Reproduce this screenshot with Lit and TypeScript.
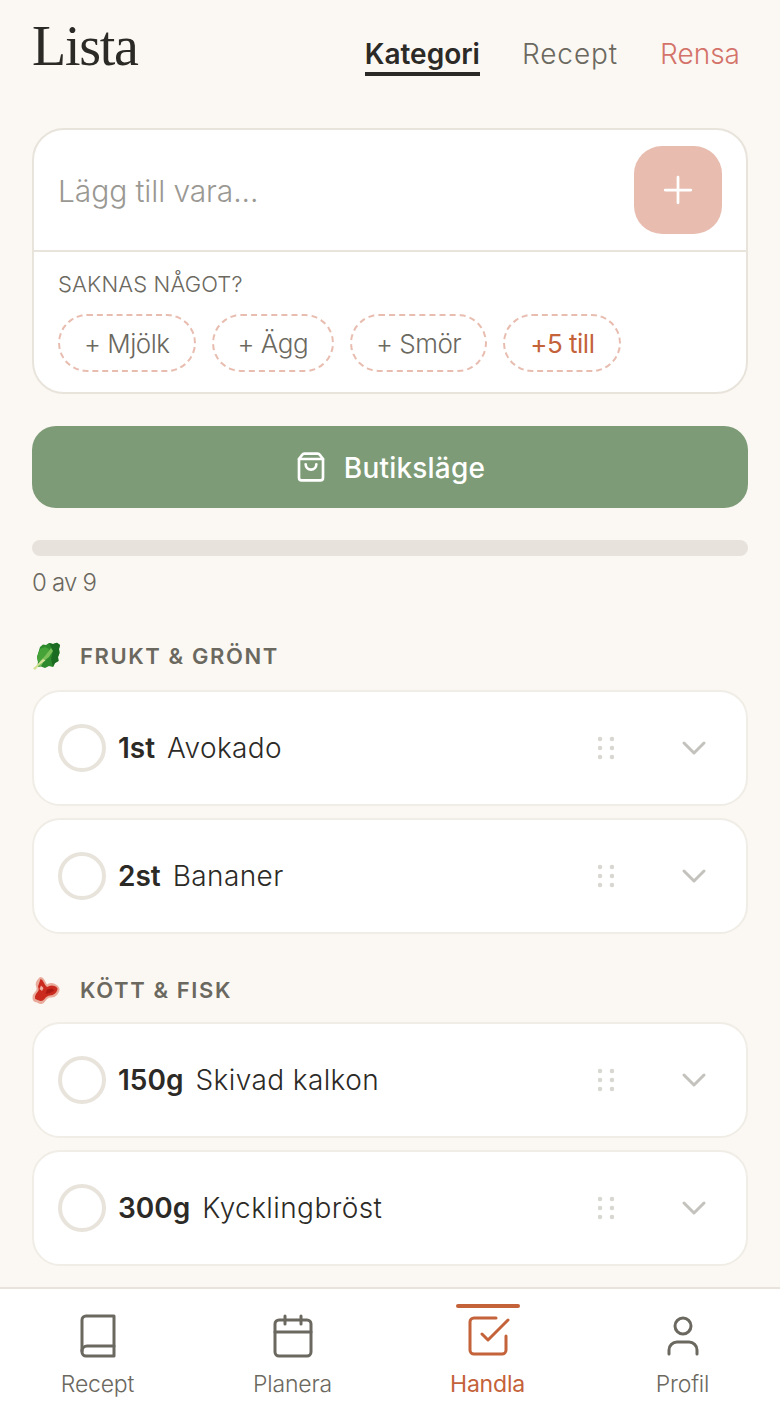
import { LitElement, html, css, svg } from 'lit';
import { customElement } from 'lit/decorators.js';

type Item = { qty: string; name: string };
type Section = { title: string; icon: 'greens' | 'meat'; items: Item[] };

const SECTIONS: Section[] = [
  {
    title: 'FRUKT & GRÖNT',
    icon: 'greens',
    items: [
      { qty: '1st', name: 'Avokado' },
      { qty: '2st', name: 'Bananer' },
    ],
  },
  {
    title: 'KÖTT & FISK',
    icon: 'meat',
    items: [
      { qty: '150g', name: 'Skivad kalkon' },
      { qty: '300g', name: 'Kycklingbröst' },
    ],
  },
];

const NAV = [
  {
    label: 'Recept',
    icon: svg`<path d="M4 19.5A2.5 2.5 0 0 1 6.5 17H20"/><path d="M6 2h14v20H6a2 2 0 0 1-2-2V4a2 2 0 0 1 2-2z"/>`,
  },
  {
    label: 'Planera',
    icon: svg`<rect x="3" y="4" width="18" height="18" rx="2"/><path d="M16 2v4M8 2v4M3 10h18"/>`,
  },
  {
    label: 'Handla',
    active: true,
    icon: svg`<path d="M9 11l3 3L22 4"/><path d="M21 12v7a2 2 0 0 1-2 2H5a2 2 0 0 1-2-2V5a2 2 0 0 1 2-2h11"/>`,
  },
  {
    label: 'Profil',
    icon: svg`<path d="M19 21v-2a4 4 0 0 0-4-4H9a4 4 0 0 0-4 4v2"/><circle cx="12" cy="7" r="4"/>`,
  },
];

const greens = html`<svg class="emoji" viewBox="0 0 28 28">
  <path d="M8 5 11 2.500 14 3 17 1 21 2 25 .8 28 3 27 7 27.500 11 26 15 26.500 19 23 21 21 25 17 24 13 26 9 24.500 5 25 6 20 5 15 6.500 10z" fill="#2c8a2c"/>
  <path d="M17 1 21 2 25 .8 28 3 27 7 27.500 11 26 15 26.500 19 23 21 21 25 19 17 21 9z" fill="#1c6b22"/>
  <path d="M8 7 13 5 17 7 16 12 10 18 6 20 5 15z" fill="#46a338"/>
  <path d="M19 6 21 9 17 15 12 19 9 24 5 25 8 19 13 14z" fill="#7cc05a"/>
  <path d="M1 26.500 11 17 13.500 18.500 7 23 5 26 3 28z" fill="#d6e29a"/>
</svg>`;

const meat = html`<svg class="emoji" viewBox="0 0 28 28">
  <path d="M8 1Q11 1 12.500 4T15 8.500Q19 6 23 8T27.500 13 25 19 19 21.500 13 25.500 5 26.500Q.5 26 .5 22T3 16 4 10 8 1z" fill="#e9ac9c"/>
  <path d="M8.500 3Q10.500 3.500 11.500 6T15 11Q19 8.500 22.500 10T25.500 13.500 23 17.500 18 19.500 12.500 23 4.500 23.500Q2.500 23 3 20.500T5.500 16 6 10.500z" fill="#cb2a1f"/>
  <path d="M9 9.500 11.500 12 10 15 7.500 13z" fill="#efb3a5"/>
  <path d="M15 13.500 20 12.500 22.500 14.500 18 17 13.500 18z" fill="#a91a13"/>
</svg>`;

const dots = html`<svg class="dots" viewBox="0 0 16 24" aria-hidden="true">
  ${[2, 14].map((x) => [3, 12, 21].map((y) => svg`<circle cx=${x} cy=${y} r="2.300"/>`))}
</svg>`;

@customElement('app-root')
export class AppRoot extends LitElement {
  static styles = css`
    :host {
      display: flex;
      flex-direction: column;
      height: 100vh;
      overflow: hidden;
      background: #fbf8f3;
      color: #2c2a26;
      font-family: Inter, 'Noto Sans', sans-serif;
    }
    svg {
      display: block;
      fill: none;
      stroke: currentColor;
      stroke-linecap: round;
      stroke-linejoin: round;
    }
    main {
      flex: 1;
      min-height: 0;
      overflow: hidden;
      padding: 0 32px;
    }
    header {
      display: flex;
      align-items: flex-start;
      justify-content: space-between;
      height: 128px;
    }
    h1 {
      margin: 12px 0 0;
      font-family: 'Liberation Serif', serif;
      font-weight: 400;
      font-size: 56px;
      line-height: 68px;
      letter-spacing: -1.3px;
    }
    .tabs {
      display: flex;
      gap: 42px;
      margin: 37px 8px 0 0;
      font-size: 28px;
      line-height: 34px;
      font-weight: 350;
      color: #6b6860;
    }
    .tab {
      height: 39px;
      box-sizing: border-box;
    }
    .tab.recept {
      letter-spacing: 0.9px;
    }
    .tab.active {
      color: #2c2a26;
      font-weight: 600;
      border-bottom: 4px solid #2c2a26;
    }
    .tab.clear {
      color: #d4736a;
    }
    .add-card {
      background: #fff;
      border: 2px solid #e8e4dc;
      border-radius: 32px;
    }
    .add-row {
      display: flex;
      align-items: center;
      justify-content: space-between;
      height: 120px;
      padding: 0 24px;
      border-bottom: 2px solid #e8e4dc;
    }
    .add-row input {
      flex: 1;
      min-width: 0;
      border: 0;
      outline: 0;
      padding: 2px 0 0;
      background: none;
      font: inherit;
      font-size: 30px;
      font-weight: 350;
      letter-spacing: -0.1px;
    }
    .add-row input::placeholder {
      color: #9a9893;
      opacity: 1;
    }
    .add-btn {
      display: flex;
      align-items: center;
      justify-content: center;
      width: 88px;
      height: 88px;
      border-radius: 28px;
      background: #e8bdb0;
      color: #fff;
    }
    .add-btn svg {
      width: 44px;
      height: 44px;
      stroke-width: 1.5;
    }
    .missing {
      padding: 16px 24px 20px;
    }
    .missing-label {
      font-size: 22px;
      line-height: 32px;
      font-weight: 350;
      letter-spacing: 0.15px;
      color: #6b6860;
    }
    .chips {
      display: flex;
      gap: 16px;
      margin-top: 14px;
    }
    .chip {
      display: flex;
      align-items: center;
      height: 58px;
      box-sizing: border-box;
      padding: 0 24px;
      border: 2px dashed #e8bdb0;
      border-radius: 29px;
      font-size: 26px;
      font-weight: 350;
      letter-spacing: -0.5px;
      color: #6b6860;
    }
    .chip.more {
      padding: 0 25px;
      font-weight: 400;
      color: #c4623a;
    }
    .shop-btn {
      display: flex;
      align-items: center;
      justify-content: center;
      gap: 17px;
      height: 82px;
      margin-top: 32px;
      border-radius: 24px;
      background: #7d9b76;
      color: #fff;
      font-size: 28px;
      font-weight: 500;
      letter-spacing: 0.2px;
    }
    .shop-btn span {
      padding-top: 2px;
    }
    .shop-btn svg {
      width: 32px;
      height: 32px;
      stroke-width: 2;
    }
    .progress {
      height: 16px;
      margin-top: 32px;
      border-radius: 8px;
      background: #e7e2db;
    }
    .count {
      margin-top: 12px;
      font-size: 24px;
      line-height: 30px;
      font-weight: 350;
      letter-spacing: -0.8px;
      color: #6b6860;
    }
    .section-title {
      display: flex;
      align-items: center;
      gap: 20px;
      height: 32px;
      font-size: 22px;
      font-weight: 600;
      letter-spacing: 1.6px;
      color: #6b6860;
    }
    section {
      margin-top: 42px;
    }
    section + section {
      margin-top: 40px;
    }
    section + section .items {
      margin-top: 16px;
    }
    .emoji {
      width: 28px;
      height: 28px;
      stroke: none;
    }
    .items {
      display: flex;
      flex-direction: column;
      gap: 12px;
      margin-top: 18px;
    }
    .item {
      display: flex;
      align-items: center;
      height: 116px;
      box-sizing: border-box;
      padding: 0 24px;
      background: #fff;
      border: 2px solid #f0ede6;
      border-radius: 28px;
      font-size: 28px;
    }
    .check {
      flex: none;
      width: 48px;
      height: 48px;
      box-sizing: border-box;
      border: 4px solid #e8e4dc;
      border-radius: 50%;
      margin-right: 12px;
    }
    .qty {
      font-weight: 600;
      margin-right: 12px;
    }
    .name {
      flex: 1;
      font-weight: 350;
      letter-spacing: 0.4px;
    }
    .dots {
      width: 16px;
      height: 24px;
      stroke: none;
      fill: #d9d7d2;
      margin-right: 60px;
    }
    .chevron {
      width: 40px;
      height: 40px;
      margin-right: 8px;
      color: #c4c2bd;
      stroke-width: 1.8;
    }
    nav {
      flex: none;
      display: grid;
      grid-template-columns: repeat(4, 1fr);
      height: 137px;
      box-sizing: border-box;
      background: #fff;
      border-top: 2px solid #e8e4dc;
    }
    .nav-item {
      position: relative;
      display: flex;
      flex-direction: column;
      align-items: center;
      padding-top: 23px;
      font-size: 23px;
      line-height: 30px;
      font-weight: 350;
      letter-spacing: -0.2px;
      color: #6b6860;
    }
    .nav-item svg {
      width: 48px;
      height: 48px;
      stroke-width: 1.5;
      margin-bottom: 9px;
    }
    .nav-item.active {
      font-weight: 400;
      color: #c4623a;
    }
    .nav-item.active::before {
      content: '';
      position: absolute;
      top: 15px;
      left: 50%;
      width: 64px;
      height: 4px;
      margin-left: -32px;
      border-radius: 2px;
      background: #c4623a;
    }
  `;

  private renderItem(item: Item) {
    return html`
      <div class="item">
        <span class="check"></span>
        <span class="qty">${item.qty}</span>
        <span class="name">${item.name}</span>
        ${dots}
        <svg class="chevron" viewBox="0 0 24 24"><path d="m6 9 6 6 6-6" /></svg>
      </div>
    `;
  }

  render() {
    return html`
      <main>
        <header>
          <h1>Lista</h1>
          <div class="tabs">
            <span class="tab active">Kategori</span>
            <span class="tab recept">Recept</span>
            <span class="tab clear">Rensa</span>
          </div>
        </header>

        <div class="add-card">
          <div class="add-row">
            <input placeholder="Lägg till vara..." />
            <div class="add-btn">
              <svg viewBox="0 0 24 24"><path d="M5 12h14M12 5v14" /></svg>
            </div>
          </div>
          <div class="missing">
            <div class="missing-label">SAKNAS NÅGOT?</div>
            <div class="chips">
              <span class="chip">+ Mjölk</span>
              <span class="chip">+ Ägg</span>
              <span class="chip">+ Smör</span>
              <span class="chip more">+5 till</span>
            </div>
          </div>
        </div>

        <div class="shop-btn">
          <svg viewBox="0 0 24 24">
            <path d="M7 2h10a2 2 0 0 1 1.600.8L21 6v14a2 2 0 0 1-2 2H5a2 2 0 0 1-2-2V6l2.400-3.200A2 2 0 0 1 7 2z" />
            <path d="M3 6h18" />
            <path d="M16 10a4 4 0 0 1-8 0" />
          </svg>
          <span>Butiksläge</span>
        </div>

        <div class="progress"></div>
        <div class="count">0 av 9</div>

        ${SECTIONS.map(
          (s) => html`
            <section>
              <div class="section-title">${s.icon === 'greens' ? greens : meat}${s.title}</div>
              <div class="items">${s.items.map((i) => this.renderItem(i))}</div>
            </section>
          `,
        )}
      </main>

      <nav>
        ${NAV.map(
          (n) => html`
            <div class="nav-item ${n.active ? 'active' : ''}">
              <svg viewBox="0 0 24 24">${n.icon}</svg>
              ${n.label}
            </div>
          `,
        )}
      </nav>
    `;
  }
}
